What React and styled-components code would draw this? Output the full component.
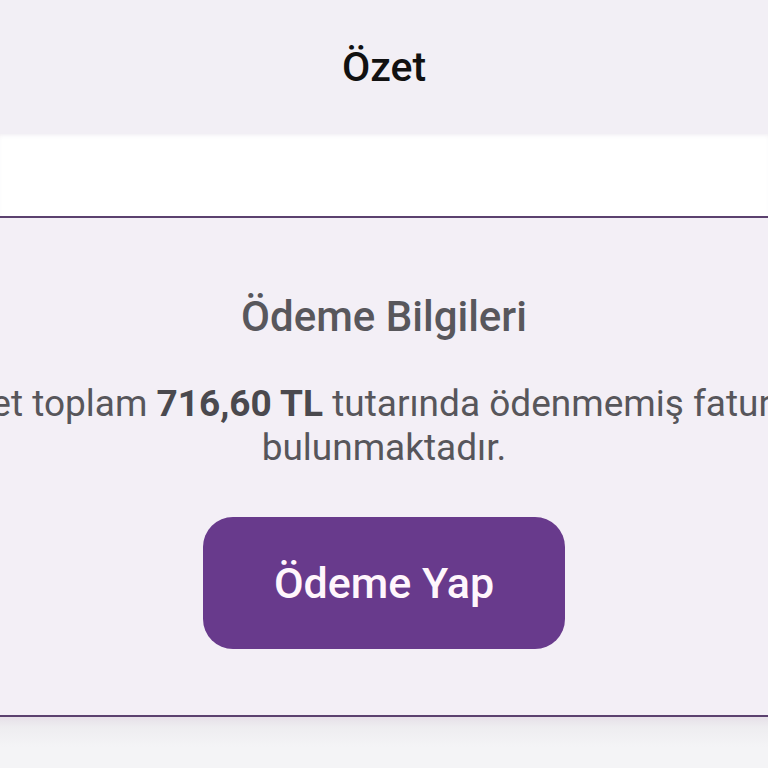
import React from 'react';
import styled, { createGlobalStyle } from 'styled-components';

const GlobalStyle = createGlobalStyle`
    html, body {
        margin: 0;
        padding: 0;
        background: #f4f4f6;
        font-family: Roboto, "Noto Sans", Arial, sans-serif;
        overflow: hidden;
    }
`;

const Screen = styled.div`
    width: 768px;
    height: 768px;
    display: flex;
    flex-direction: column;
    overflow: hidden;
    background: #f4f4f6;
`;

const Header = styled.header`
    height: 134px;
    flex-shrink: 0;
    display: flex;
    align-items: center;
    justify-content: center;
    background: #f2eff5;
`;

const HeaderTitle = styled.h1`
    margin: 0;
    font-size: 41px;
    font-weight: 500;
    color: #111;
`;

const Strip = styled.div`
    height: 82px;
    flex-shrink: 0;
    background: #ffffff;
    box-shadow: inset 0 3px 4px -2px rgba(120, 100, 140, 0.12);
`;

const Card = styled.section`
    flex-shrink: 0;
    display: flex;
    flex-direction: column;
    align-items: center;
    padding: 74px 0 66px;
    background: #f3eff6;
    border-top: 2px solid #5b416f;
    border-bottom: 2px solid #5b416f;
`;

const CardTitle = styled.h2`
    margin: 0;
    font-size: 42px;
    line-height: 50px;
    font-weight: 500;
    color: #58575c;
`;

const Message = styled.div`
    width: 100%;
    margin-top: 40px;
    display: flex;
    flex-direction: column;
    align-items: center;
    font-size: 37px;
    line-height: 44px;
    color: #57565b;
`;

// wider than the screen on purpose: centered and cut at both edges
const MessageLine = styled.div`
    width: 100%;
    display: flex;
    justify-content: center;
    white-space: nowrap;
`;

const Amount = styled.b`
    font-weight: 700;
    color: #4a494e;
`;

const PayButton = styled.button`
    margin-top: 47px;
    width: 362px;
    height: 132px;
    border: none;
    border-radius: 30px;
    background: #683a8c;
    color: #fff6fc;
    font-family: inherit;
    font-size: 43px;
    font-weight: 500;
    cursor: pointer;
`;

const Footer = styled.div`
    flex: 1;
    background: linear-gradient(#e6e0e8 0px, #eeedf0 10px, #f4f4f6 30px);
`;

export default function App() {
    return (
        <>
            <GlobalStyle />
            <Screen>
                <Header>
                    <HeaderTitle>Özet</HeaderTitle>
                </Header>
                <Strip />
                <Card>
                    <CardTitle>Ödeme Bilgileri</CardTitle>
                    <Message>
                        <MessageLine>
                            <span>Paket toplam&nbsp;<Amount>716,60 TL</Amount>&nbsp;tutarında ödenmemiş faturanız</span>
                        </MessageLine>
                        <MessageLine>bulunmaktadır.</MessageLine>
                    </Message>
                    <PayButton>Ödeme Yap</PayButton>
                </Card>
                <Footer />
            </Screen>
        </>
    );
}
